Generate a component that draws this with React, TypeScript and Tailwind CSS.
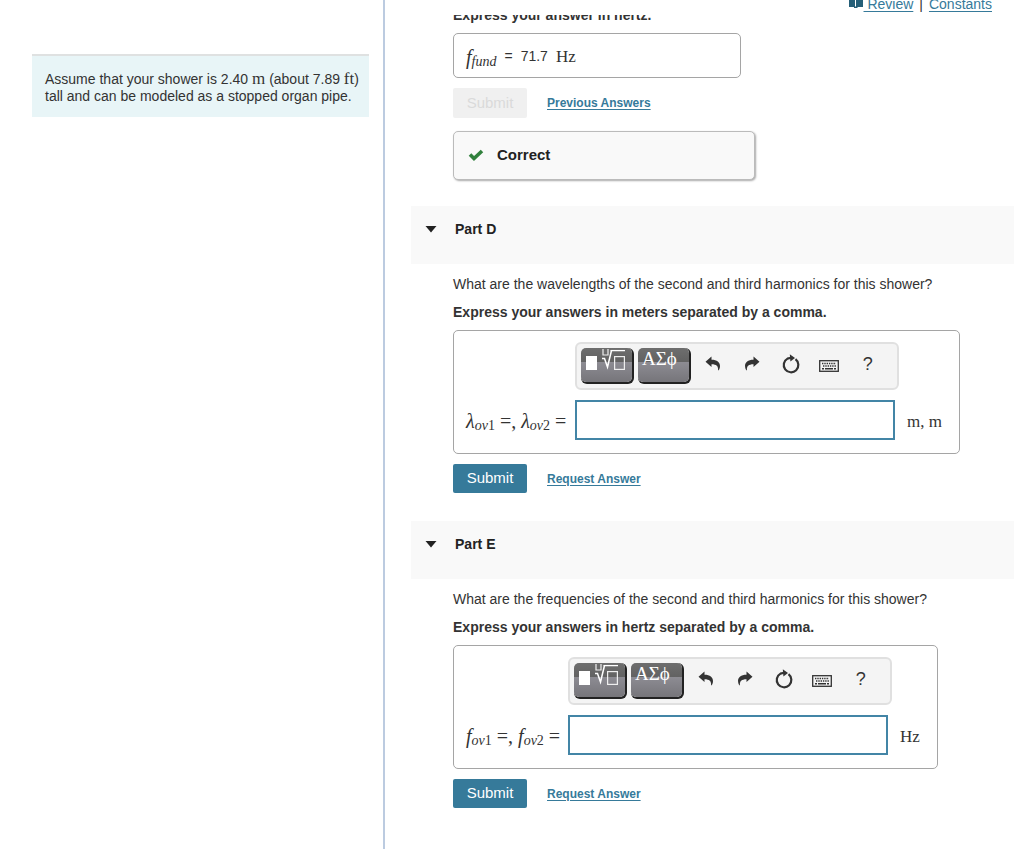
import { useState } from 'react'
import type { ReactNode } from 'react'

const MATH = "font-['Liberation_Serif',serif] text-[#333]"
const LINK = 'text-[#367a9a] underline underline-offset-2'

type PartProps = {
  id: string
  title: string
  question: string
  instruction: string
  symbol: string
  unit: string
  columns: string
}

const PARTS: PartProps[] = [
  {
    id: 'd',
    title: 'Part D',
    question: 'What are the wavelengths of the second and third harmonics for this shower?',
    instruction: 'Express your answers in meters separated by a comma.',
    symbol: 'λ',
    unit: 'm, m',
    columns: 'grid-cols-[109px_324px_auto]',
  },
  {
    id: 'e',
    title: 'Part E',
    question: 'What are the frequencies of the second and third harmonics for this shower?',
    instruction: 'Express your answers in hertz separated by a comma.',
    symbol: 'f',
    unit: 'Hz',
    columns: 'grid-cols-[102px_324px_auto]',
  },
]

function Sym({ base, sub, digit }: { base: string; sub: string; digit?: string }) {
  return (
    <span className="text-[20px]">
      <i>{base}</i>
      <span className="relative top-[2px] text-[14px]">
        <i>{sub}</i>
        {digit}
      </span>
    </span>
  )
}

function UndoIcon({ flip }: { flip?: boolean }) {
  return (
    <svg
      viewBox="0 0 16 16"
      className={flip ? 'h-4 w-4 -scale-x-100' : 'h-4 w-4'}
      fill="#333"
      aria-hidden="true"
    >
      <path d="M0.500 5.700 6.500 0.500v3.200c5.500 0 8.500 2.500 8.500 6.300 0 1.600-.5 3-1.200 4.300h-.7c.3-4-1.500-6-6.600-6v2.800Z" />
    </svg>
  )
}

function ResetIcon() {
  return (
    <svg viewBox="0 0 20 20" className="h-5 w-5" fill="none" aria-hidden="true">
      <path d="M14.500 5.200A7.300 7.300 0 1 1 6.500 4.600L10 3.800" stroke="#333" strokeWidth="2.200" />
      <path d="M8.800 0.200 14 4 9.400 7.400Z" fill="#333" />
    </svg>
  )
}

function KeyboardIcon() {
  return (
    <svg viewBox="0 0 20 12" className="h-3 w-5" fill="none" aria-hidden="true">
      <rect x="0.700" y="0.700" width="18.600" height="10.600" stroke="#333" strokeWidth="1.300" />
      <path d="M3 3.600h14M4 6h13" stroke="#333" strokeWidth="1.500" strokeDasharray="1.400 0.900" />
      <path d="M3 8.700h2M6 8.700h8M15 8.700h2" stroke="#333" strokeWidth="1.500" />
    </svg>
  )
}

function TemplatesIcon() {
  return (
    <svg viewBox="0 0 42 22" className="h-[22px] w-[42px]" fill="none" aria-hidden="true">
      <rect x="1" y="8" width="11" height="14" fill="#fff" />
      <path d="M18 1v6h5V1" stroke="#eee" strokeWidth="1.200" />
      <path d="M25.500 2.600H40" stroke="#fff" strokeWidth="1.300" />
      <path d="M17 10.500h2.500l3 8.500 4-16.500" stroke="#fff" strokeWidth="1.500" />
      <rect x="29.600" y="8.600" width="9.800" height="12.800" stroke="#eee" strokeWidth="1.200" />
    </svg>
  )
}

function Plate({ label, children }: { label: string; children: ReactNode }) {
  return (
    <button
      type="button"
      aria-label={label}
      className="flex h-[34px] w-[51px] items-start rounded-[5px] bg-[linear-gradient(#6e6e6e_0%,#626262_40%,#8d8c93_41%,#76757a_100%)] pl-1 text-white shadow-[1px_1px_0_1px_#222]"
    >
      {children}
    </button>
  )
}

function Toolbar() {
  return (
    <div className="flex h-12 items-start rounded-md border-2 border-[#e0e0e0] bg-[#f4f4f4] pt-1 pl-1">
      <div className="flex gap-[6px] pr-[2px]">
        <Plate label="Templates">
          <TemplatesIcon />
        </Plate>
        <Plate label="Symbols">
          <span className="font-['Liberation_Serif',serif] text-[19px] leading-[22px]">ΑΣϕ</span>
        </Plate>
      </div>
      <div className="ml-[3px] grid h-8 grow grid-cols-5 place-items-center pr-[10px]">
        <button type="button" aria-label="Undo">
          <UndoIcon />
        </button>
        <button type="button" aria-label="Redo">
          <UndoIcon flip />
        </button>
        <button type="button" aria-label="Reset">
          <ResetIcon />
        </button>
        <button type="button" aria-label="Keyboard shortcuts" className="pt-1">
          <KeyboardIcon />
        </button>
        <button type="button" aria-label="Help" className="text-[18px] text-[#333]">
          ?
        </button>
      </div>
    </div>
  )
}

function Part({ id, title, question, instruction, symbol, unit, columns }: PartProps) {
  const [open, setOpen] = useState(true)
  const [answer, setAnswer] = useState('')

  return (
    <section className="mt-7 first:mt-0">
      <h2 className="h-[58px] bg-[#f9f9f9]">
        <button
          type="button"
          aria-expanded={open}
          onClick={() => setOpen(o => !o)}
          className="flex h-[46px] items-center gap-[18px] pl-[14px] text-[14px] font-bold text-[#222]"
        >
          <svg viewBox="0 0 12 7" className="h-[7px] w-3" fill="#222" aria-hidden="true">
            <path d="M0.500 0h11L6 6.500Z" />
          </svg>
          {title}
        </button>
      </h2>
      {open && (
        <form className="pt-[10px] pl-[42px]" onSubmit={e => e.preventDefault()}>
          <p className="leading-5">{question}</p>
          <p className="mt-2 font-bold leading-5">{instruction}</p>
          <div
            className={`mt-2 grid w-fit items-center gap-y-[10px] rounded-[5px] border border-[#a5a5a5] pt-[11px] pr-[17px] pb-[13px] pl-3 ${columns}`}
          >
            <div className="col-start-2">
              <Toolbar />
            </div>
            <label
              htmlFor={`answer-${id}`}
              className={`${MATH} col-start-1 row-start-2 pt-1 text-[20px] leading-6 whitespace-nowrap`}
            >
              <Sym base={symbol} sub="ov" digit="1" /> =, <Sym base={symbol} sub="ov" digit="2" /> =
            </label>
            <input
              id={`answer-${id}`}
              type="text"
              value={answer}
              onChange={e => setAnswer(e.target.value)}
              className="col-start-2 row-start-2 h-10 w-[320px] border-2 border-[#4385a6] bg-white px-2 outline-none"
            />
            <span className={`${MATH} col-start-3 row-start-2 pt-1 pl-2 text-[17px]`}>{unit}</span>
          </div>
          <div className="mt-[10px] flex items-center gap-5">
            <button
              type="submit"
              className="h-[29px] w-[74px] rounded-xs bg-[#367a9a] text-[15px] text-white"
            >
              Submit
            </button>
            <a href="#request" className={`${LINK} text-[12px] font-bold`}>
              Request Answer
            </a>
          </div>
        </form>
      )}
    </section>
  )
}

export default function App() {
  return (
    <div className="flex h-screen overflow-hidden bg-white font-['Liberation_Sans',Arial,sans-serif] text-[14px] text-[#333]">
      <aside className="w-[37.6%] shrink-0 border-r-2 border-[#bccbe0] pt-[54px] pr-[14px] pl-8">
        <p className="border-t-2 border-[#dfe1e1] bg-[#e8f5f7] pt-[15px] pb-3 pl-[13px] leading-[17px]">
          Assume that your shower is 2.40 <span className={`${MATH} text-[17px] leading-4`}>m</span>{' '}
          (about 7.89 <span className={`${MATH} text-[17px] leading-4`}>ft</span>)
          <br />
          tall and can be modeled as a stopped organ pipe.
        </p>
      </aside>

      <main className="flex min-w-0 grow flex-col pr-[10px] pl-[26px]">
        <nav className="flex h-[15px] shrink-0 items-end justify-end overflow-hidden pr-[22px] pb-[3px] text-[14px] leading-4">
          <svg viewBox="0 0 16 14" className="h-[14px] w-4" fill="#255f78" aria-hidden="true">
            <path d="M1 0h6v9H1ZM8 0h7v9H8ZM6 8.500h3.500v1.500H6Z" />
          </svg>
          <a href="#review" className={LINK}>
            &nbsp;Review
          </a>
          <span className="px-[6px]">|</span>
          <a href="#constants" className={LINK}>
            Constants
          </a>
        </nav>

        <div className="min-h-0 grow overflow-hidden">
          <div className="pl-[42px]">
            <p className="-mt-[10px] font-bold leading-5">Express your answer in hertz.</p>
            <div className="mt-2 flex h-[45px] w-[288px] items-center rounded-[5px] border border-[#a5a5a5] pt-[2px] pl-3">
              <span className={MATH}>
                <Sym base="f" sub="fund" />
              </span>
              <span className="ml-2">=</span>
              <span className="ml-2">71.7</span>
              <span className={`${MATH} ml-2 text-[17px]`}>Hz</span>
            </div>
            <div className="mt-[10px] flex items-center gap-5">
              <button
                type="button"
                disabled
                className="h-[30px] w-[74px] rounded-xs bg-[#f0f0f0] text-[15px] text-[#dadada]"
              >
                Submit
              </button>
              <a href="#previous" className={`${LINK} text-[12px] font-bold`}>
                Previous Answers
              </a>
            </div>
            <div className="mt-[13px] flex h-[49px] w-[302px] items-center gap-[13px] rounded-[5px] border border-[#bbb] bg-[#f9f9f9] pl-[14px] text-[15px] font-bold text-[#222] shadow-[1px_1px_2px_#aaa]">
              <svg viewBox="0 0 16 14" className="h-[14px] w-4" fill="none" aria-hidden="true">
                <path d="M2 5.500 6 9.500 14 2" stroke="#31813d" strokeWidth="3.600" />
              </svg>
              Correct
            </div>
          </div>
          <div className="mt-[26px]">
            {PARTS.map(part => (
              <Part key={part.id} {...part} />
            ))}
          </div>
        </div>
      </main>
    </div>
  )
}
